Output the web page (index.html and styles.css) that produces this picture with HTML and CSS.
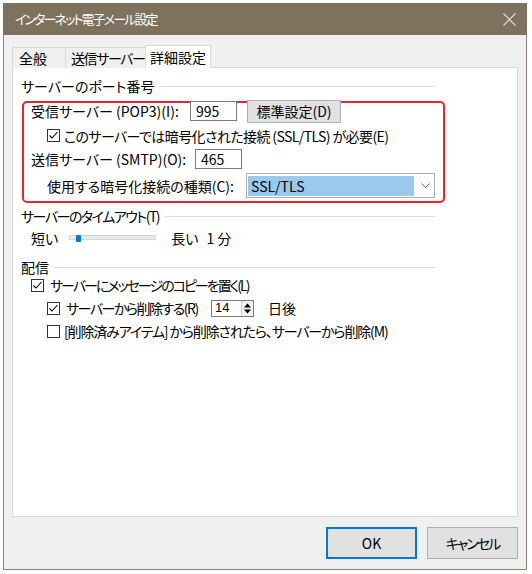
FILE: index.html
```html
<!DOCTYPE html>
<html lang="ja">
<head>
<meta charset="utf-8">
<title>インターネット電子メール設定</title>
<link rel="stylesheet" href="styles.css">
</head>
<body>
<div class="window">
  <div class="titlebar">
    <span class="title">インターネット電子メール設定</span>
    <svg class="close" width="13" height="13" viewBox="0 0 13 13"><path d="M0.5 0.5L12.5 12.5M12.5 0.5L0.5 12.5"/></svg>
  </div>
  <div class="content">
    <div class="tabs">
      <div class="tab first">全般</div>
      <div class="tab second"><span class="t-send">送信サーバー</span></div>
      <div class="tab active">詳細設定</div>
    </div>
    <div class="panel">
      <div class="group-head gh-port"><span>サーバーのポート番号</span><i class="rule"></i></div>
      <div class="highlight">
        <div class="row r1">
          <span class="lbl lbl-pop">受信サーバー (POP3)(I):</span>
          <span class="field f-pop">995</span>
          <span class="btn btn-std">標準設定(D)</span>
        </div>
        <div class="row r2">
          <svg class="cb" width="13" height="13" viewBox="0 0 13 13"><rect x="0.5" y="0.5" width="12" height="12"/><path class="tick" d="M2.5 6.5L5 9L10.5 3"/></svg>
          <span class="cb-text t-ssl">このサーバーでは暗号化された接続 (SSL/TLS) が必要(E)</span>
        </div>
        <div class="row r3">
          <span class="lbl lbl-smtp">送信サーバー (SMTP)(O):</span>
          <span class="field f-smtp">465</span>
        </div>
        <div class="row r4">
          <span class="lbl lbl-enc">使用する暗号化接続の種類(C):</span>
          <span class="select">
            <span class="sel-value">SSL/TLS</span>
            <svg class="chev" width="9" height="5" viewBox="0 0 9 5"><path d="M0.5 0.5L4.5 4.5L8.5 0.5"/></svg>
          </span>
        </div>
      </div>
      <div class="group-head gh-timeout"><span class="t-timeout">サーバーのタイムアウト(T)</span><i class="rule"></i></div>
      <div class="row slider-row">
        <span class="s-short">短い</span>
        <span class="track"><span class="thumb"></span></span>
        <span class="s-long">長い</span>
        <span class="s-val">1 分</span>
      </div>
      <div class="group-head gh-deliv"><span>配信</span><i class="rule"></i></div>
      <div class="row d1">
        <svg class="cb" width="13" height="13" viewBox="0 0 13 13"><rect x="0.5" y="0.5" width="12" height="12"/><path class="tick" d="M2.5 6.5L5 9L10.5 3"/></svg>
        <span class="cb-text t-copy">サーバーにメッセージのコピーを置く(L)</span>
      </div>
      <div class="row d2">
        <svg class="cb" width="13" height="13" viewBox="0 0 13 13"><rect x="0.5" y="0.5" width="12" height="12"/><path class="tick" d="M2.5 6.5L5 9L10.5 3"/></svg>
        <span class="cb-text d2-text"><span class="t-del">サーバーから削除する(R)</span></span>
        <span class="spin">
          <span class="spin-val">14</span>
          <span class="spin-btns">
            <svg width="9" height="13" viewBox="0 0 9 13"><path d="M4.5 1.5L8 5.5H1Z"/><path d="M1 7.5H8L4.5 11.5Z"/></svg>
          </span>
        </span>
        <span class="days">日後</span>
      </div>
      <div class="row d3">
        <svg class="cb" width="13" height="13" viewBox="0 0 13 13"><rect x="0.5" y="0.5" width="12" height="12"/></svg>
        <span class="cb-text t-trash">[削除済みアイテム] から削除されたら、サーバーから削除(M)</span>
      </div>
    </div>
    <div class="buttons">
      <span class="btn dlg ok">OK</span>
      <span class="btn dlg"><span class="t-cancel">キャンセル</span></span>
    </div>
  </div>
</div>
</body>
</html>
```

FILE: styles.css
```css
* { box-sizing: border-box; }
html, body { margin: 0; padding: 0; background: #ffffff; }
body {
  font-family: "Noto Sans CJK JP", "Noto Sans", sans-serif;
  font-size: 14px;
  line-height: 16px;
  color: #000;
  font-feature-settings: "palt";
}
.window {
  margin: 3px 0 0 3px;
  width: 524px;
  height: 567px;
  border: 1px solid #8a8276;
  border-top: none;
  background: #f0f0f0;
  display: flex;
  flex-direction: column;
}
.titlebar {
  height: 32px;
  background: #7e725e;
  margin: 0 -1px;
  display: flex;
  align-items: center;
  justify-content: space-between;
  padding: 0 11px 0 12px;
  color: #fff;
}
.title { font-size: 13px; letter-spacing: -1.9px; }
.close { stroke: #e6e2dc; stroke-width: 1.1; fill: none; }
.content {
  flex: 1;
  display: flex;
  flex-direction: column;
  padding: 11px 8px 10px 8px;
}
.tabs {
  display: flex;
  height: 22px;
  align-items: flex-end;
  position: relative;
  z-index: 1;
  margin-bottom: -1px;
}
.tab {
  flex: none;
  height: 21px;
  padding: 2px 0 0 6px;
  border: 1px solid #d9d9d9;
  border-bottom: none;
  border-left: none;
  background: #f0f0f0;
  white-space: nowrap;
}
.tab.first { border-left: 1px solid #d9d9d9; width: 54px; }
.tab.second { width: 80px; padding-left: 5px; }
.t-send { letter-spacing: -1.4px; }
.tab.active {
  height: 23px;
  width: 66px;
  background: #fff;
  border-left: 1px solid #d9d9d9;
  margin-left: -1px;
  padding: 3px 0 0 4px;
}
.panel {
  flex: 1;
  background: #fff;
  border: 1px solid #d9d9d9;
  padding: 10px 0 0 8px;
  display: flex;
  flex-direction: column;
}
.group-head {
  display: flex;
  align-items: center;
  width: 414px;
  height: 16px;
}
.group-head span { white-space: nowrap; }
.group-head .rule {
  flex: 1;
  height: 0;
  border-top: 1px solid #dcdcdc;
  margin-left: 5px;
  margin-top: 1px;
}
.highlight {
  margin-top: 7px;
  margin-left: 1px;
  width: 423px;
  height: 102px;
  border: 2px solid #e8262e;
  border-radius: 5px;
  display: flex;
  flex-direction: column;
}
.row { display: flex; align-items: center; white-space: nowrap; }
.r1 { margin-top: -4px; height: 24px; padding-left: 7px; }
.r2 { margin-top: 2px; height: 21px; padding-left: 23px; }
.r3 { margin-top: 2px; height: 21px; padding-left: 7px; }
.r4 { margin-top: 4px; height: 25px; padding-left: 23px; }
.lbl-pop { width: 159px; }
.lbl-smtp { width: 164px; }
.lbl-enc { width: 199px; }
.field {
  height: 20px;
  border: 1px solid #7a7a7a;
  background: #fff;
  padding: 1px 0 0 5px;
  line-height: 16px;
}
.f-pop { width: 47px; }
.f-smtp { width: 47px; }
.btn {
  background: #e1e1e1;
  border: 1px solid #adadad;
  display: flex;
  align-items: center;
  justify-content: center;
}
.btn-std { margin-left: 10px; width: 94px; height: 23px; }
.cb { flex: none; }
.cb rect { fill: #fff; stroke: #333; stroke-width: 1; }
.cb .tick { fill: none; stroke: #000; stroke-width: 1.1; }
.cb-text { margin-left: 4px; }
.t-ssl { letter-spacing: -0.6px; }
.select {
  width: 189px;
  height: 25px;
  border: 1px solid #adadad;
  background: #fff;
  display: flex;
  align-items: center;
  padding: 0 0 0 1px;
}
.sel-value {
  width: 166px;
  height: 20px;
  background: #99c9ef;
  border: 1px solid #99c9ef;
  padding: 1px 0 0 2px;
}
.chev { margin-left: 7px; fill: none; stroke: #606060; stroke-width: 1; }
.gh-timeout { margin-top: 5px; }
.t-timeout { letter-spacing: -1.5px; }
.slider-row { margin-top: 6px; height: 16px; padding-left: 10px; }
.track {
  margin-left: 11px;
  width: 87px;
  height: 5px;
  background: #e7eaea;
  border: 1px solid #d6d6d6;
  position: relative;
  margin-top: -2px;
}
.thumb {
  position: absolute;
  left: 6px;
  top: -1px;
  width: 5px;
  height: 7px;
  background: #0078d7;
  border-radius: 1px;
}
.s-long { margin-left: 15px; }
.s-val { margin-left: 8px; }
.gh-deliv { margin-top: 13px; }
.d1 { margin-top: 2px; height: 16px; padding-left: 10px; }
.d1 .cb-text { margin-left: 6px; }
.t-copy { letter-spacing: -2px; }
.d2 { margin-top: 6px; height: 18px; padding-left: 26px; }
.d2-text { width: 145px; margin-left: 6px; }
.t-del { letter-spacing: -1.5px; }
.spin {
  width: 43px;
  height: 17px;
  border: 1px solid #7a7a7a;
  display: flex;
  align-items: center;
  font-family: "Liberation Sans", sans-serif;
  font-size: 13px;
}
.spin-val { flex: 1; padding-left: 3px; }
.spin-btns {
  width: 12px;
  height: 15px;
  border-left: 1px solid #d0d0d0;
  background: #f0f0f0;
  display: flex;
  align-items: center;
  justify-content: center;
}
.spin-btns svg { fill: #000; }
.days { margin-left: 14px; }
.d3 { margin-top: 6px; height: 16px; padding-left: 26px; }
.d3 .cb-text { margin-left: 4px; }
.t-trash { letter-spacing: -1.15px; }
.buttons {
  display: flex;
  justify-content: flex-end;
  gap: 10px;
  margin-top: 10px;
  height: 32px;
}
.btn.dlg { width: 91px; height: 32px; }
.btn.ok { border: 2px solid #0078d7; }
.t-cancel { letter-spacing: -2px; }
```
